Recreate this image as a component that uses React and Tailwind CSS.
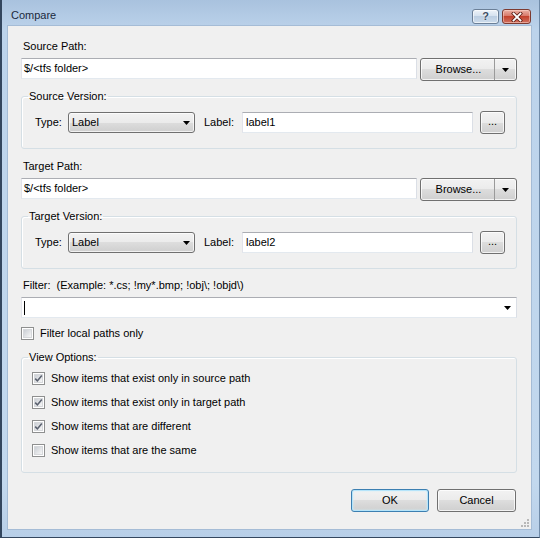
import React from "react";

const F = "font-['Liberation_Sans',Arial,sans-serif]";

function Arrow({ className = "" }) {
  return (
    <svg width="7" height="4" viewBox="0 0 7 4" className={className}>
      <path d="M0 0 H7 L3.5 4 Z" fill="#000" />
    </svg>
  );
}

function TextBox({ value, className = "" }) {
  return (
    <div
      className={`h-[21px] bg-white border border-t-[#abadb3] border-l-[#e2e3ea] border-r-[#dbdfe6] border-b-[#e3e9ef] pl-[2px] flex items-center text-[11px] text-black leading-none ${className}`}
    >
      {value}
    </div>
  );
}

function ComboList({ value, className = "" }) {
  return (
    <div
      className={`h-[21px] rounded-[3px] border border-[#707070] bg-[linear-gradient(#f2f2f2,#ebebeb_50%,#dddddd_50%,#cfcfcf)] shadow-[inset_0_0_0_1px_rgba(255,255,255,0.7)] flex items-center justify-between pl-[3px] pr-[4px] text-[11px] text-black ${className}`}
    >
      <span>{value}</span>
      <Arrow />
    </div>
  );
}

function Button({ children, className = "", def = false }) {
  return (
    <div
      className={`h-[23px] rounded-[3px] border ${
        def
          ? "border-[#3c7fb1] shadow-[inset_0_0_0_1px_#b5e4fa,inset_0_0_2px_1px_#cdeefc]"
          : "border-[#707070] shadow-[inset_0_0_0_1px_rgba(255,255,255,0.75)]"
      } bg-[linear-gradient(#f2f2f2,#ebebeb_50%,#dddddd_50%,#cfcfcf)] flex items-center justify-center text-[11px] text-black ${className}`}
    >
      {children}
    </div>
  );
}

function BrowseButton() {
  return (
    <div className="h-[23px] w-[97px] rounded-[3px] border border-[#707070] shadow-[inset_0_0_0_1px_rgba(255,255,255,0.75)] bg-[linear-gradient(#f2f2f2,#ebebeb_50%,#dddddd_50%,#cfcfcf)] flex text-[11px] text-black">
      <div className="flex-1 flex items-center justify-center pl-[2px]">Browse...</div>
      <div className="w-[22px] border-l border-[#9a9a9a] flex items-center justify-center">
        <Arrow />
      </div>
    </div>
  );
}

function CheckBox({ checked }) {
  return (
    <div className="w-[13px] h-[13px] shrink-0 border border-[#8e8f8f] bg-white p-[1px]">
      <div className="w-full h-full bg-[linear-gradient(135deg,#cbcfd5,#f6f6f6)] border border-[#d6d8db] relative">
        {checked && (
          <svg width="11" height="11" viewBox="0 0 11 11" className="absolute left-[-2px] top-[-2px]">
            <path d="M2.2 5.6 L4.4 7.9 L8.8 2.6" fill="none" stroke="#5b6270" strokeWidth="1.6" />
          </svg>
        )}
      </div>
    </div>
  );
}

function Group({ title, children, className = "" }) {
  return (
    <fieldset className={`border border-[#d5dfe5] rounded-[3px] shadow-[inset_1px_1px_0_#fff] ${className}`}>
      <legend className="ml-[6px] px-[1px] h-[16px] leading-[16px] text-[11px] text-black">{title}</legend>
      {children}
    </fieldset>
  );
}

function PathSection({ title, group, label, first }) {
  return (
    <div className={`flex flex-col ${first ? "" : "mt-[9px]"}`}>
      <div className="h-[16px] leading-[16px] pl-[2px] text-[11px] text-black">{title}</div>
      <div className="mt-[4px] flex items-start gap-[3px]">
        <TextBox value="$/<tfs folder>" className="w-[396px]" />
        <BrowseButton />
      </div>
      <Group title={group} className="mt-[7px]">
        <div className="mt-[7px] pb-[14px] pl-[13px] flex items-center h-[23px] box-content text-[11px] text-black">
          <div className="w-[33px]">Type:</div>
          <ComboList value="Label" className="w-[127px]" />
          <div className="ml-[9px] w-[38px]">Label:</div>
          <TextBox value={label} className="w-[231px] pl-[3px]" />
          <Button className="ml-[7px] w-[25px] pb-[3px]">...</Button>
        </div>
      </Group>
    </div>
  );
}

function CheckRow({ checked, text, className = "" }) {
  return (
    <div className={`h-[16px] flex items-center text-[11px] text-black ${className}`}>
      <CheckBox checked={checked} />
      <span className="ml-[6px]">{text}</span>
    </div>
  );
}

export default function App() {
  return (
    <div className={`${F} w-[540px] h-[538px] overflow-hidden flex flex-col bg-[linear-gradient(#a9c2de,#bcd3eb_30px,#c2d8ee_90%,#b8cfe8)] border-l-2 border-r border-b border-l-[#33465e] border-r-[#6f8aa8] border-b-[#34475f]`}>
      {/* Title bar */}
      <div className="h-[26px] shrink-0 flex items-start">
        <div className="ml-[9px] mt-[7px] h-[16px] leading-[16px] text-[11px] text-[#1b2a3e]">Compare</div>
        <div className="ml-auto mt-[9px] mr-[8px] flex gap-[3px]">
          <div className="w-[27px] h-[15px] rounded-[3px] border border-[#6b7f97] bg-[linear-gradient(#eef3f9,#d3e0ee_50%,#bccee2_50%,#cddcec)] shadow-[inset_0_0_0_1px_rgba(255,255,255,0.6)] flex items-center justify-center">
            <span className="text-[11px] font-bold leading-none text-[#3c4d63] [text-shadow:0_0_2px_#fff]">?</span>
          </div>
          <div className="w-[29px] h-[15px] rounded-[3px] border border-[#7d3a30] bg-[linear-gradient(#eab1a5,#d8796a_45%,#c3422d_50%,#d0705f)] shadow-[inset_0_0_0_1px_rgba(255,220,210,0.5)] flex items-center justify-center">
            <svg width="12" height="10" viewBox="0 0 12 10">
              <path d="M2.5 1.5 L9.5 8.5 M9.5 1.5 L2.5 8.5" stroke="#5a1d15" strokeWidth="3.4" strokeLinecap="square" />
              <path d="M2.5 1.5 L9.5 8.5 M9.5 1.5 L2.5 8.5" stroke="#fff" strokeWidth="1.8" strokeLinecap="square" />
            </svg>
          </div>
        </div>
      </div>

      {/* Client area */}
      <div className="ml-[6px] w-[523px] h-[503px] shrink-0 bg-[#f0f0f0] outline outline-1 outline-[#a5bcd6] flex flex-col pl-[13px] pr-[14px] pt-[12px] relative">
        <PathSection first title="Source Path:" group="Source Version:" label="label1" />
        <PathSection title="Target Path:" group="Target Version:" label="label2" />

        <div className="mt-[8px] h-[16px] leading-[16px] pl-[2px] text-[11px] text-black whitespace-pre">
          {"Filter:  (Example: *.cs; !my*.bmp; !obj\\; !objd\\)"}
        </div>
        <div className="mt-[4px] h-[21px] bg-white border border-t-[#abadb3] border-l-[#e2e3ea] border-r-[#dbdfe6] border-b-[#e3e9ef] flex items-center justify-between pl-[2px] pr-[5px]">
          <div className="w-px h-[14px] bg-black" />
          <Arrow />
        </div>

        <CheckRow className="mt-[7px]" checked={false} text="Filter local paths only" />

        <Group title="View Options:" className="mt-[8px]">
          <div className="mt-[5px] pb-[14px] pl-[10px] flex flex-col gap-[8px]">
            <CheckRow checked text="Show items that exist only in source path" />
            <CheckRow checked text="Show items that exist only in target path" />
            <CheckRow checked text="Show items that are different" />
            <CheckRow checked={false} text="Show items that are the same" />
          </div>
        </Group>

        <div className="mt-[16px] mr-[1px] flex justify-end gap-[8px]">
          <Button def className="w-[78px]">OK</Button>
          <Button className="w-[79px]">Cancel</Button>
        </div>

        <svg width="10" height="10" viewBox="0 0 10 10" className="absolute right-[1px] bottom-[1px]">
          <g fill="#b8b8b8">
            <rect x="7" y="1" width="2" height="2" />
            <rect x="4" y="4" width="2" height="2" />
            <rect x="7" y="4" width="2" height="2" />
            <rect x="1" y="7" width="2" height="2" />
            <rect x="4" y="7" width="2" height="2" />
            <rect x="7" y="7" width="2" height="2" />
          </g>
        </svg>
      </div>
    </div>
  );
}
